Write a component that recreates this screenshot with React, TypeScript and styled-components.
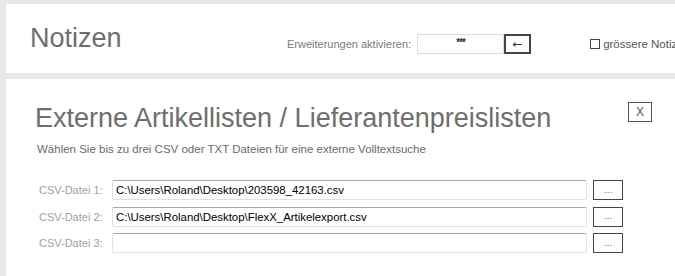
import styled, { createGlobalStyle } from "styled-components";

const GlobalStyle = createGlobalStyle`
  html, body {
    margin: 0;
    padding: 0;
    background: #e8e8e8;
    overflow: hidden;
    font-family: "Liberation Sans", Arial, sans-serif;
  }
`;

const Page = styled.div`
  width: 720px;
  padding: 4px 0 0 6px;
  display: flex;
  flex-direction: column;
  gap: 6px;
`;

const Panel = styled.div`
  background: #ffffff;
  box-sizing: border-box;
`;

const NotesBar = styled(Panel)`
  height: 69px;
  padding: 11px 0 0 24px;
  display: flex;
  align-items: center;
`;

const PageTitle = styled.h1`
  align-self: flex-start;
  margin: 10px 0 0 0;
  width: 257px;
  font-size: 27px;
  line-height: 1;
  font-weight: normal;
  color: #6e6e6e;
`;

const SmallLabel = styled.span`
  font-size: 11px;
  color: #7a7a7a;
  margin-right: 6px;
`;

const CodeField = styled.div`
  box-sizing: border-box;
  width: 87px;
  height: 20px;
  padding-bottom: 4px;
  border: 1px solid #dcdcdc;
  display: flex;
  align-items: center;
  justify-content: center;
  font-size: 10px;
  font-weight: bold;
  color: #333;
  letter-spacing: -1px;
`;

const ArrowButton = styled.button`
  box-sizing: border-box;
  width: 27px;
  height: 20px;
  border: 2px solid #444;
  background: #fff;
  padding: 0;
  font-family: "DejaVu Sans", sans-serif;
  font-size: 12px;
  line-height: 1;
  color: #333;
`;

const CheckOption = styled.label`
  display: flex;
  align-items: center;
  margin-left: 59px;
  font-size: 11.5px;
  color: #555;
  white-space: nowrap;
`;

const CheckBox = styled.span`
  box-sizing: border-box;
  width: 10px;
  height: 10px;
  border: 1px solid #444;
  margin-right: 3px;
`;

const ListPanel = styled(Panel)`
  height: 200px;
  padding: 23px 0 0 29px;
`;

const Header = styled.div`
  width: 617px;
  display: flex;
  justify-content: space-between;
  align-items: flex-start;
`;

const SectionTitle = styled.h2`
  margin: 3px 0 0 0;
  font-size: 27px;
  line-height: 1;
  font-weight: normal;
  color: #6e6e6e;
`;

const CloseButton = styled.button`
  box-sizing: border-box;
  width: 24px;
  height: 20px;
  border: 1px solid #555;
  background: #fff;
  padding: 0;
  font-family: "Liberation Sans", Arial, sans-serif;
  font-size: 12px;
  color: #555;
`;

const Hint = styled.p`
  margin: 11px 0 0 2px;
  font-size: 11.5px;
  line-height: 13px;
  color: #6a6a6a;
`;

const FileList = styled.div`
  margin-top: 24px;
  padding-left: 4px;
  display: flex;
  flex-direction: column;
  gap: 6.5px;
`;

const FileRow = styled.div`
  display: flex;
  align-items: center;
`;

const FileLabel = styled.span`
  width: 73px;
  font-size: 11px;
  color: #a0a0a0;
`;

const PathField = styled.div`
  box-sizing: border-box;
  width: 475px;
  height: 20px;
  padding-left: 3px;
  border: 1px solid #e0e0e0;
  border-top-color: #a8a8a8;
  border-radius: 2px;
  display: flex;
  align-items: center;
  font-size: 11.4px;
  color: #000;
  white-space: nowrap;
  overflow: hidden;
`;

const BrowseButton = styled.button`
  box-sizing: border-box;
  width: 30px;
  height: 20px;
  margin-left: 6px;
  border: 1px solid #444;
  background: #fff;
  padding: 0 0 3px 0;
  font-family: "Liberation Sans", Arial, sans-serif;
  font-size: 11px;
  color: #777;
`;

const files = [
  { label: "CSV-Datei 1:", path: "C:\\Users\\Roland\\Desktop\\203598_42163.csv" },
  { label: "CSV-Datei 2:", path: "C:\\Users\\Roland\\Desktop\\FlexX_Artikelexport.csv" },
  { label: "CSV-Datei 3:", path: "" },
];

export default function App() {
  return (
    <>
      <GlobalStyle />
      <Page>
        <NotesBar>
          <PageTitle>Notizen</PageTitle>
          <SmallLabel>Erweiterungen aktivieren:</SmallLabel>
          <CodeField>***</CodeField>
          <ArrowButton>←</ArrowButton>
          <CheckOption>
            <CheckBox />
            grössere Notiz
          </CheckOption>
        </NotesBar>
        <ListPanel>
          <Header>
            <SectionTitle>Externe Artikellisten / Lieferantenpreislisten</SectionTitle>
            <CloseButton>X</CloseButton>
          </Header>
          <Hint>Wählen Sie bis zu drei CSV oder TXT Dateien für eine externe Volltextsuche</Hint>
          <FileList>
            {files.map((f) => (
              <FileRow key={f.label}>
                <FileLabel>{f.label}</FileLabel>
                <PathField>{f.path}</PathField>
                <BrowseButton>...</BrowseButton>
              </FileRow>
            ))}
          </FileList>
        </ListPanel>
      </Page>
    </>
  );
}
